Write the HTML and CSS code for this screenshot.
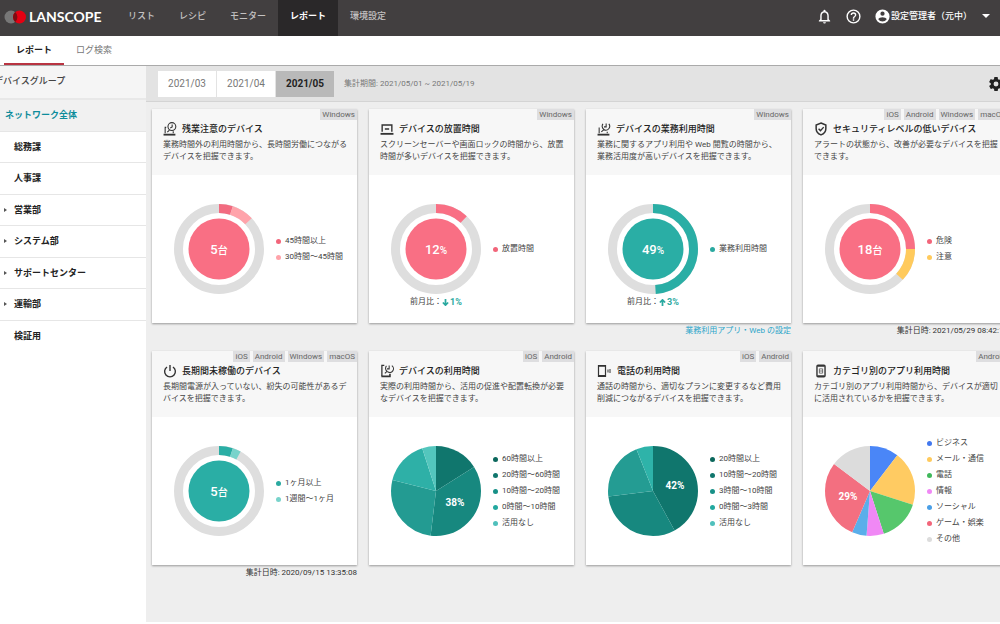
FILE: index.html
```html
<!DOCTYPE html>
<html lang="ja">
<head>
<meta charset="utf-8">
<meta name="viewport" content="width=device-width, initial-scale=1">
<title>LANSCOPE レポート</title>
<link rel="stylesheet" href="styles.css">
</head>
<body>
<header class="topbar">
  <a class="brand" href="#">
    <svg class="brand-mark" viewBox="0 0 23 14" aria-hidden="true"><circle cx="7" cy="7" r="6.500" fill="#777"/><circle cx="15.500" cy="7" r="6.500" fill="#e60012"/><path d="M11.200 2.100a6.500 6.500 0 0 1 0 9.800a6.500 6.500 0 0 1 0-9.800z" fill="#7d0d12"/></svg>
    <span>LANSCOPE</span>
  </a>
  <nav class="main-nav">
    <a href="#">リスト</a><a href="#">レシピ</a><a href="#">モニター</a><a class="current" href="#">レポート</a><a href="#">環境設定</a>
  </nav>
  <div class="tools">
    <button class="icon-btn" type="button" aria-label="通知"><svg viewBox="0 0 24 24" fill="currentColor"><path d="M12 22a2 2 0 0 0 2-2h-4a2 2 0 0 0 2 2zm6-6v-5c0-3.070-1.630-5.640-4.500-6.320V4a1.500 1.500 0 0 0-3 0v.680C7.640 5.360 6 7.920 6 11v5l-2 2v1h16v-1zm-2 1H8v-6c0-2.480 1.510-4.500 4-4.500s4 2.020 4 4.500z"/></svg></button>
    <button class="icon-btn" type="button" aria-label="ヘルプ"><svg viewBox="0 0 24 24" fill="currentColor"><path d="M11 18h2v-2h-2zm1-16a10 10 0 1 0 0 20 10 10 0 0 0 0-20zm0 18a8 8 0 1 1 0-16 8 8 0 0 1 0 16zm0-14a4 4 0 0 0-4 4h2a2 2 0 1 1 4 0c0 2-3 1.750-3 5h2c0-2.250 3-2.500 3-5a4 4 0 0 0-4-4z"/></svg></button>
    <button class="user-btn" type="button"><svg class="avatar" viewBox="0 0 24 24" fill="currentColor" aria-hidden="true"><path d="M12 2a10 10 0 1 0 0 20 10 10 0 0 0 0-20zm0 3a3 3 0 1 1 0 6 3 3 0 0 1 0-6zm0 14.200a7.200 7.200 0 0 1-6-3.220c.030-1.990 4-3.080 6-3.080s5.970 1.090 6 3.080a7.200 7.200 0 0 1-6 3.220z"/></svg><span>設定管理者（元中）</span><span class="caret"></span></button>
  </div>
</header>
<nav class="sub-nav">
  <a class="current" href="#">レポート</a><a href="#">ログ検索</a>
</nav>
<div class="layout">
  <aside class="sidebar">
    <h2 class="side-title"><span>デバイスグループ</span></h2>
    <ul class="groups">
      <li><a class="root" href="#">ネットワーク全体</a></li>
      <li><a href="#">総務課</a></li>
      <li><a href="#">人事課</a></li>
      <li><a class="parent" href="#">営業部</a></li>
      <li><a class="parent" href="#">システム部</a></li>
      <li><a class="parent" href="#">サポートセンター</a></li>
      <li><a class="parent" href="#">運輸部</a></li>
      <li><a href="#">検証用</a></li>
    </ul>
  </aside>
  <main class="main">
    <div class="toolbar">
      <div class="months">
        <button type="button">2021/03</button><button type="button">2021/04</button><button class="current" type="button">2021/05</button>
      </div>
      <span class="period">集計期間: 2021/05/01 ~ 2021/05/19</span>
      <button class="gear" type="button" aria-label="設定"><svg viewBox="2 2 20 20" fill="currentColor"><path d="M19.400 13a7.500 7.500 0 0 0 0-2l2.100-1.650a.5.5 0 0 0 .12-.64l-2-3.460a.5.5 0 0 0-.61-.22l-2.490 1a7.300 7.300 0 0 0-1.690-.98l-.38-2.650A.5.5 0 0 0 14 2h-4a.5.5 0 0 0-.49.420l-.38 2.650c-.61.250-1.170.590-1.690.980l-2.490-1a.5.5 0 0 0-.61.220l-2 3.460a.5.5 0 0 0 .12.640L4.600 11a7.500 7.500 0 0 0 0 2l-2.110 1.650a.5.5 0 0 0-.12.640l2 3.460c.12.220.39.300.61.220l2.490-1c.52.400 1.080.730 1.690.980l.38 2.650c.03.240.240.400.490.400h4c.250 0 .460-.180.490-.420l.38-2.650c.61-.250 1.170-.590 1.690-.980l2.490 1c.230.090.490 0 .610-.220l2-3.460a.5.5 0 0 0-.12-.640zM12 15.500a3.500 3.500 0 1 1 0-7 3.500 3.500 0 0 1 0 7z"/></svg></button>
    </div>
    <div class="cards">

      <section class="cell">
        <article class="card">
          <header class="card-head">
            <div class="tags"><span>Windows</span></div>
            <h3><svg class="ico" viewBox="0 0 26 26"><circle cx="16.500" cy="8.500" r="7.300"/><path d="M17 4.500v4.500l-3.500 2M6 10H4v11M12 15l-4 4M19 17v4"/><path d="M1 23.500h22" stroke-width="3.400"/></svg>残業注意のデバイス</h3>
            <p>業務時間外の利用時間から、長時間労働につながるデバイスを把握できます。</p>
          </header>
          <div class="card-body">
            <figure class="chart"><svg class="plot" viewBox="0 0 90 90"><g class="ring"><circle class="track" r="40.500"/><circle r="40.500" pathLength="100" stroke="#f26b80" stroke-dasharray="5 95"/><circle r="40.500" pathLength="100" stroke="#ffa3aa" stroke-dasharray="8 92" stroke-dashoffset="-5"/></g><circle cx="45" cy="45" r="30.500" fill="#f96f84"/><text x="45" y="50">5<tspan class="unit">台</tspan></text></svg></figure>
            <ul class="legend"><li><i class="dot rose"></i>45時間以上</li><li><i class="dot pink"></i>30時間〜45時間</li></ul>
          </div>
        </article>
      </section>

      <section class="cell">
        <article class="card">
          <header class="card-head">
            <div class="tags"><span>Windows</span></div>
            <h3><svg class="ico" viewBox="0 0 26 26"><path d="M4 18V5.500h18V18M9 13h8" stroke-width="2.600"/><path d="M1 22h24" stroke-width="3.400"/></svg>デバイスの放置時間</h3>
            <p>スクリーンセーバーや画面ロックの時間から、放置時間が多いデバイスを把握できます。</p>
          </header>
          <div class="card-body">
            <figure class="chart noted"><svg class="plot" viewBox="0 0 90 90"><g class="ring"><circle class="track" r="40.500"/><circle r="40.500" pathLength="100" stroke="#f96f84" stroke-dasharray="12 88"/></g><circle cx="45" cy="45" r="30.500" fill="#f96f84"/><text x="45" y="50">12<tspan class="unit">%</tspan></text></svg><figcaption>前月比：<b><svg class="arrow" viewBox="0 0 8 8"><path d="M4 0v7M1 4l3 3 3-3"/></svg>1%</b></figcaption></figure>
            <ul class="legend"><li><i class="dot rose"></i>放置時間</li></ul>
          </div>
        </article>
      </section>

      <section class="cell">
        <article class="card">
          <header class="card-head">
            <div class="tags"><span>Windows</span></div>
            <h3><svg class="ico" viewBox="0 0 26 26"><path d="M11 3.500a7.300 7.300 0 0 0 2 10.500l-5 4.500M13 14.500a7.300 7.300 0 0 0 9-11M17 3v6h-4M4 10v11M19 18v3"/><path d="M1 23.500h22" stroke-width="3.400"/></svg>デバイスの業務利用時間</h3>
            <p>業務に関するアプリ利用や Web 閲覧の時間から、業務活用度が高いデバイスを把握できます。</p>
          </header>
          <div class="card-body">
            <figure class="chart noted"><svg class="plot" viewBox="0 0 90 90"><g class="ring"><circle class="track" r="40.500"/><circle r="40.500" pathLength="100" stroke="#2aaea5" stroke-dasharray="49 51"/></g><circle cx="45" cy="45" r="30.500" fill="#2aaea5"/><text x="45" y="50">49<tspan class="unit">%</tspan></text></svg><figcaption>前月比：<b><svg class="arrow" viewBox="0 0 8 8"><path d="M4 8V1M1 4l3-3 3 3"/></svg>3%</b></figcaption></figure>
            <ul class="legend"><li><i class="dot teal"></i>業務利用時間</li></ul>
          </div>
        </article>
        <div class="foot"><a href="#">業務利用アプリ・Web の設定</a></div>
      </section>

      <section class="cell">
        <article class="card">
          <header class="card-head">
            <div class="tags"><span>iOS</span><span>Android</span><span>Windows</span><span>macOS</span></div>
            <h3><svg class="ico" viewBox="0 0 26 26"><path d="M13 2l9 3.500v7c0 6-4 9.500-9 11.500-5-2-9-5.500-9-11.500v-7z" stroke-width="2.800"/><path d="M8.500 12.500l3.500 3.500 6-6.500" stroke-width="2.600"/></svg>セキュリティレベルの低いデバイス</h3>
            <p>アラートの状態から、改善が必要なデバイスを把握できます。</p>
          </header>
          <div class="card-body">
            <figure class="chart"><svg class="plot" viewBox="0 0 90 90"><g class="ring"><circle class="track" r="40.500"/><circle r="40.500" pathLength="100" stroke="#f96f84" stroke-dasharray="25 75"/><circle r="40.500" pathLength="100" stroke="#ffca5c" stroke-dasharray="12 88" stroke-dashoffset="-25"/></g><circle cx="45" cy="45" r="30.500" fill="#f96f84"/><text x="45" y="50">18<tspan class="unit">台</tspan></text></svg></figure>
            <ul class="legend"><li><i class="dot rose"></i>危険</li><li><i class="dot yellow"></i>注意</li></ul>
          </div>
        </article>
        <div class="foot">集計日時: 2021/05/29 08:42:18</div>
      </section>

      <section class="cell">
        <article class="card">
          <header class="card-head">
            <div class="tags"><span>iOS</span><span>Android</span><span>Windows</span><span>macOS</span></div>
            <h3><svg class="ico" viewBox="0 0 26 26"><path d="M13 2v11M7.500 5.500a10 10 0 1 0 11 0" stroke-width="2.600"/></svg>長期間未稼働のデバイス</h3>
            <p>長期間電源が入っていない、紛失の可能性があるデバイスを把握できます。</p>
          </header>
          <div class="card-body">
            <figure class="chart"><svg class="plot" viewBox="0 0 90 90"><g class="ring"><circle class="track" r="40.500"/><circle r="40.500" pathLength="100" stroke="#2aaea5" stroke-dasharray="5 95"/><circle r="40.500" pathLength="100" stroke="#78d3cb" stroke-dasharray="3 97" stroke-dashoffset="-5"/></g><circle cx="45" cy="45" r="30.500" fill="#2aaea5"/><text x="45" y="50">5<tspan class="unit">台</tspan></text></svg></figure>
            <ul class="legend"><li><i class="dot teal"></i>1ヶ月以上</li><li><i class="dot mint"></i>1週間〜1ヶ月</li></ul>
          </div>
        </article>
        <div class="foot">集計日時: 2020/09/15 13:35:08</div>
      </section>

      <section class="cell">
        <article class="card">
          <header class="card-head">
            <div class="tags"><span>iOS</span><span>Android</span></div>
            <h3><svg class="ico" viewBox="0 0 26 26"><path d="M8 2.500H3.500v20" stroke-width="2.400"/><path d="M2.500 23h16v-5" stroke-width="3"/><path d="M12 3.500a7 7 0 0 0 1 10l-4 4M14 14.500a7 7 0 0 0 8-11.500M17 3v6h-4"/></svg>デバイスの利用時間</h3>
            <p>実際の利用時間から、活用の促進や配置転換が必要なデバイスを把握できます。</p>
          </header>
          <div class="card-body">
            <figure class="chart"><svg class="plot" viewBox="0 0 90 90"><g class="pie"><circle r="22.500" pathLength="100" stroke="#10766d" stroke-dasharray="16 84"/><circle r="22.500" pathLength="100" stroke="#17887f" stroke-dasharray="36 64" stroke-dashoffset="-16"/><circle r="22.500" pathLength="100" stroke="#239b92" stroke-dasharray="27 73" stroke-dashoffset="-52"/><circle r="22.500" pathLength="100" stroke="#2eb0a7" stroke-dasharray="16 84" stroke-dashoffset="-79"/><circle r="22.500" pathLength="100" stroke="#53c6bd" stroke-dasharray="5 95" stroke-dashoffset="-95"/></g><text class="share" x="64" y="60">38%</text></svg></figure>
            <ul class="legend"><li><i class="dot t1"></i>60時間以上</li><li><i class="dot t2"></i>20時間〜60時間</li><li><i class="dot t3"></i>10時間〜20時間</li><li><i class="dot t4"></i>0時間〜10時間</li><li><i class="dot t5"></i>活用なし</li></ul>
          </div>
        </article>
      </section>

      <section class="cell">
        <article class="card">
          <header class="card-head">
            <div class="tags"><span>iOS</span><span>Android</span></div>
            <h3><svg class="ico wide" viewBox="0 0 30 26"><path d="M3 2h14v22H3z" stroke-width="2.400"/><path d="M3 3h14M3 22.500h14" stroke-width="3"/><path d="M22 10v6M26 9v8" stroke-width="2"/></svg>電話の利用時間</h3>
            <p>通話の時間から、適切なプランに変更するなど費用削減につながるデバイスを把握できます。</p>
          </header>
          <div class="card-body">
            <figure class="chart"><svg class="plot" viewBox="0 0 90 90"><g class="pie"><circle r="22.500" pathLength="100" stroke="#10766d" stroke-dasharray="42 58"/><circle r="22.500" pathLength="100" stroke="#17887f" stroke-dasharray="31 69" stroke-dashoffset="-42"/><circle r="22.500" pathLength="100" stroke="#249c93" stroke-dasharray="21 79" stroke-dashoffset="-73"/><circle r="22.500" pathLength="100" stroke="#2eb3a9" stroke-dasharray="6 94" stroke-dashoffset="-94"/></g><text class="share" x="67" y="43">42%</text></svg></figure>
            <ul class="legend"><li><i class="dot t1"></i>20時間以上</li><li><i class="dot t2"></i>10時間〜20時間</li><li><i class="dot t3"></i>3時間〜10時間</li><li><i class="dot t4"></i>0時間〜3時間</li><li><i class="dot t5"></i>活用なし</li></ul>
          </div>
        </article>
      </section>

      <section class="cell">
        <article class="card">
          <header class="card-head">
            <div class="tags"><span>Android</span></div>
            <h3><svg class="ico" viewBox="0 0 26 26"><rect x="5.500" y="2" width="15" height="22" rx="2" stroke-width="2.600"/><path d="M6 3.500h14M6 22.500h14" stroke-width="3"/><path d="M10 9h6v8h-6zM10 13h6" stroke-width="1.200"/></svg>カテゴリ別のアプリ利用時間</h3>
            <p>カテゴリ別のアプリ利用時間から、デバイスが適切に活用されているかを把握できます。</p>
          </header>
          <div class="card-body">
            <figure class="chart"><svg class="plot" viewBox="0 0 90 90"><g class="pie"><circle r="22.500" pathLength="100" stroke="#4a86f7" stroke-dasharray="10.400 89.600"/><circle r="22.500" pathLength="100" stroke="#ffcb62" stroke-dasharray="19.600 80.400" stroke-dashoffset="-10.400"/><circle r="22.500" pathLength="100" stroke="#56c76c" stroke-dasharray="15 85" stroke-dashoffset="-30"/><circle r="22.500" pathLength="100" stroke="#f088f5" stroke-dasharray="6.300 93.700" stroke-dashoffset="-45"/><circle r="22.500" pathLength="100" stroke="#5aaeea" stroke-dasharray="5.200 94.800" stroke-dashoffset="-51.300"/><circle r="22.500" pathLength="100" stroke="#f36f80" stroke-dasharray="28.800 71.200" stroke-dashoffset="-56.500"/><circle r="22.500" pathLength="100" stroke="#dcdcdc" stroke-dasharray="14.700 85.300" stroke-dashoffset="-85.300"/></g><text class="share" x="23" y="54">29%</text></svg></figure>
            <ul class="legend"><li><i class="dot blue"></i>ビジネス</li><li><i class="dot yellow"></i>メール・通信</li><li><i class="dot green"></i>電話</li><li><i class="dot violet"></i>情報</li><li><i class="dot sky"></i>ソーシャル</li><li><i class="dot rose"></i>ゲーム・娯楽</li><li><i class="dot gray"></i>その他</li></ul>
          </div>
        </article>
      </section>

    </div>
  </main>
</div>
</body>
</html>
```

FILE: styles.css
```css
* { box-sizing: border-box; }

body {
  margin: 0;
  height: 100vh;
  display: flex;
  flex-direction: column;
  padding-bottom: 2px;
  overflow: hidden;
  background: #fff;
  color: #333;
  font: 9px/12px Roboto, "Noto Sans CJK JP", sans-serif;
}

a { color: inherit; text-decoration: none; }
ul, h2, h3, p, figure { margin: 0; padding: 0; }
ul { list-style: none; }
button { border: 0; padding: 0; background: none; color: inherit; font: inherit; cursor: pointer; }
svg { display: block; flex: none; }

.topbar { display: flex; height: 36px; flex: none; background: #423f40; color: #fff; }
.brand { display: flex; align-items: center; gap: 2px; width: 116px; padding: 0 0 3px 4px; font: bold 14px/16px Lato, sans-serif; }
.brand-mark { width: 23px; height: 14px; }
.main-nav { display: flex; }
.main-nav a { padding: 0 12px; line-height: 32px; color: #c4c2c2; font-weight: 500; }
.main-nav .current { background: #2a2829; color: #fff; font-weight: 700; }
.tools { display: flex; align-items: center; gap: 12px; margin-left: auto; padding: 0 10px 4px 0; }
.icon-btn svg, .avatar { width: 17px; height: 17px; }
.user-btn { display: flex; align-items: center; font-weight: 500; }
.caret { margin-left: 10px; border: 4px solid transparent; border-top-color: #fff; border-bottom: 0; }

.sub-nav { display: flex; flex: none; height: 30px; padding-left: 4px; border-bottom: 1px solid #aaa; color: #777; }
.sub-nav a { padding: 0 12px; line-height: 28px; }
.sub-nav .current { border-bottom: 2px solid #b93442; color: #222; font-weight: 700; }

.layout { display: flex; flex: 1; min-height: 0; }
.sidebar { flex: none; width: 146px; background: #fff; overflow: hidden; }
.side-title { height: 34px; background: #f5f5f5; border-bottom: 2px solid #e8e8e8; font-size: 9px; line-height: 30px; font-weight: 500; color: #444; }
.side-title span { margin-left: -6px; }
.groups { display: grid; grid-auto-rows: 1fr; min-height: 252px; color: #222; font-weight: 700; }
.groups a { display: flex; align-items: center; height: 100%; padding-left: 14px; border-bottom: 1px solid #e6e6e6; }
.groups li:last-child a { border-bottom: 0; }
.groups .root { padding-left: 5px; background: #f1f1f1; color: #0d8c9b; }
.groups .parent { padding-left: 4px; }
.groups .parent::before { content: ""; width: 0; margin-right: 7px; border: 2px solid transparent; border-left: 3px solid #555; border-right: 0; }

.main { flex: 1; min-width: 0; background: #eee; overflow: hidden; }
.toolbar { display: flex; align-items: center; height: 36px; padding-left: 12px; background: #e3e3e3; border-bottom: 1px solid #d4d4d4; }
.months { display: flex; gap: 1px; }
.months button { width: 58px; height: 26px; background: #fff; color: #777; font-size: 10px; }
.months .current { background: #b9b9b9; color: #222; font-weight: 700; }
.period { margin-left: 10px; font-size: 8px; color: #777; }
.gear { margin-left: auto; margin-right: -3px; color: #222; }
.gear svg { width: 14px; height: 14px; }

.cards { display: grid; grid-template-columns: repeat(4, 1fr); gap: 13px 12px; margin: 7px -8px 0 6px; }
.card { background: #fff; box-shadow: 0 1px 2px #999; }
.card-head { position: relative; min-height: 66px; padding: 13px 8px 10px 11px; background: #f7f7f7; }
.card-head h3 { display: flex; align-items: center; gap: 5px; height: 14px; font-size: 9px; font-weight: 500; color: #222; }
.card-head p { padding-top: 3px; font-size: 8px; color: #444; }
.ico { width: 14px; height: 14px; fill: none; stroke: #333; stroke-width: 2; }
.wide { width: 15px; }
.tags { position: absolute; top: 0; right: 0; display: flex; gap: 3px; font-size: 8px; line-height: 11px; color: #666; }
.tags span { padding: 0 2px; background: #dedee0; }

.card-body { display: flex; align-items: center; gap: 12px; height: 148px; padding-left: 22px; }
.chart { flex: none; width: 90px; }
.noted { padding-top: 16px; }
.plot { width: 90px; height: 90px; fill: none; }
.ring, .pie { transform: translate(45px, 45px) rotate(-90deg); }
.ring { stroke-width: 9px; }
.pie { stroke-width: 45px; }
.track { stroke: #dedede; }
.plot text { fill: #fff; font-size: 13px; font-weight: 500; text-anchor: middle; }
.plot .unit { font-size: 10px; }
.plot .share { font-size: 10px; font-weight: 700; }
figcaption { display: flex; justify-content: center; font-size: 8px; line-height: 16px; color: #444; }
figcaption b { display: flex; align-items: center; gap: 1px; font-size: 9px; color: #2aa9a0; }
.arrow { width: 7px; height: 7px; fill: none; stroke: #2aa9a0; stroke-width: 2; }

.legend { font-size: 8px; line-height: 16px; color: #444; white-space: nowrap; }
.legend li { display: flex; align-items: center; gap: 4px; }
.dot { width: 5px; height: 5px; border-radius: 50%; }
.rose { background: #f2657a; }
.pink { background: #ffa3aa; }
.teal { background: #2aa9a0; }
.mint { background: #78d3cb; }
.yellow { background: #ffca5c; }
.blue { background: #4278ee; }
.green { background: #40b85a; }
.violet { background: #f088f5; }
.sky { background: #4a9fe6; }
.gray { background: #dcdcdc; }
.t1 { background: #0b675c; }
.t2 { background: #10766d; }
.t3 { background: #179087; }
.t4 { background: #22a89f; }
.t5 { background: #50c0bc; }

.cell { min-height: 229px; }
.foot { padding-top: 1px; font-size: 8px; line-height: 14px; text-align: right; color: #333; }
.foot a { color: #2ba5c9; }
```
